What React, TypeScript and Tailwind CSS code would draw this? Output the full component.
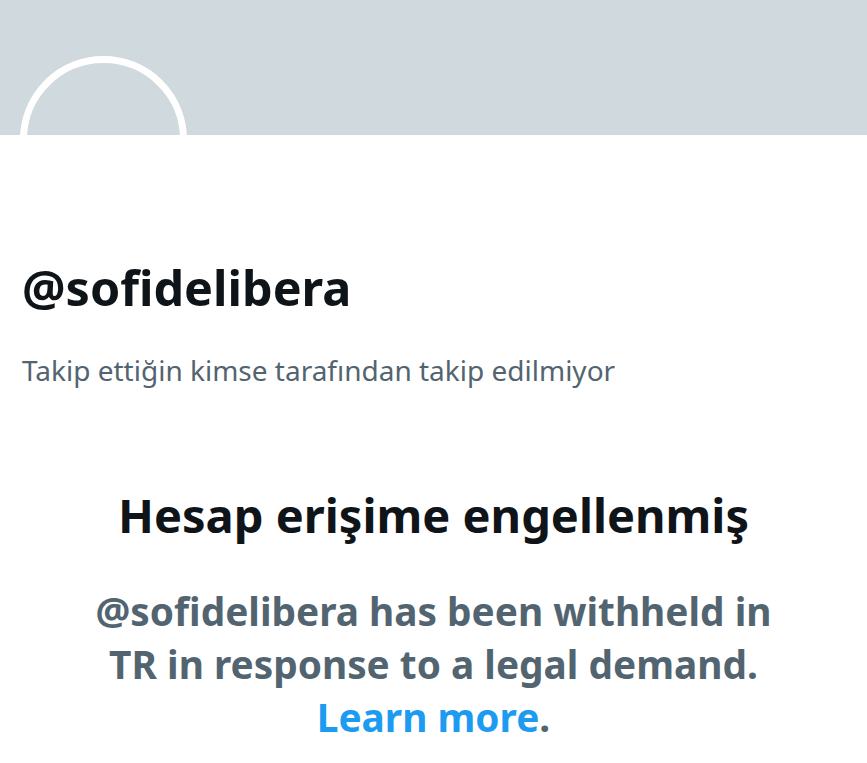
import React from 'react';

const FONT = { fontFamily: '"Noto Sans", Roboto, "Liberation Sans", sans-serif' };

const ProfileBanner = () => {
  return (
    <div className="relative h-[135px] w-full bg-[#cfd9de]">
      {/* avatar ring, only the upper half shows over the banner */}
      <div className="absolute left-[20px] top-[56px] h-[167px] w-[167px] rounded-full border-[7px] border-white" />
    </div>
  );
};

const ProfileHeader = () => {
  return (
    <div className="flex flex-col px-[22px]">
      <h1 className="mt-[124px] text-[48.5px] font-bold leading-[56px] text-[#0f1419]">
        @sofidelibera
      </h1>
      <p className="mt-[37px] text-[28px] leading-[36px] text-[#536471]">
        Takip ettiğin kimse tarafından takip edilmiyor
      </p>
    </div>
  );
};

const WithheldNotice = () => {
  return (
    <div className="flex flex-col items-center px-[40px] text-center">
      <h2 className="mt-[99px] text-[47px] font-bold leading-[56px] text-[#0f1419]">
        Hesap erişime engellenmiş
      </h2>
      <p className="mt-[42px] max-w-[700px] text-[38.8px] font-bold leading-[53px] text-[#536471]">
        @sofidelibera has been withheld in TR in response to a legal demand.{' '}
        <span className="text-[#1d9bf0]">Learn more</span>.
      </p>
    </div>
  );
};

export default function App() {
  return (
    <div className="min-h-[763px] w-full overflow-hidden bg-white" style={FONT}>
      <ProfileBanner />
      <ProfileHeader />
      <WithheldNotice />
    </div>
  );
}
